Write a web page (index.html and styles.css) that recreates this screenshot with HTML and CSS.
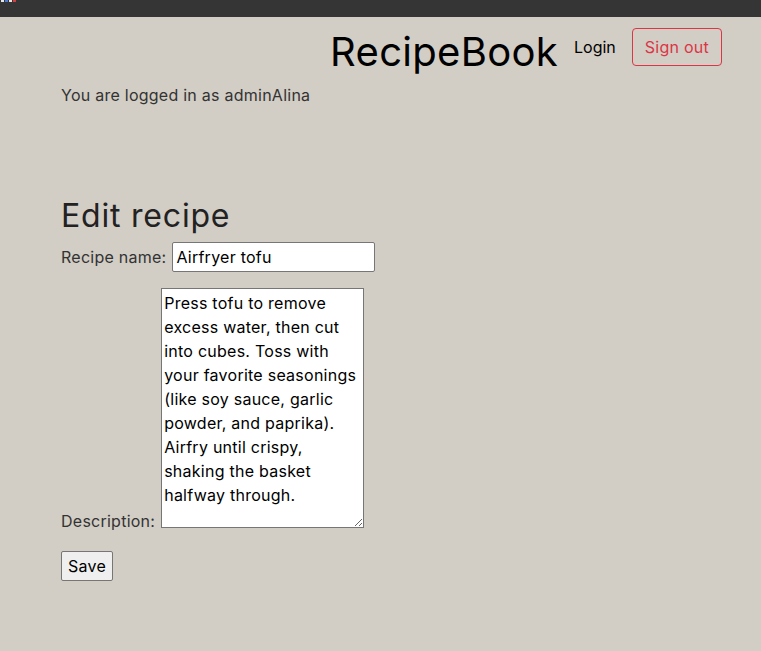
FILE: index.html
```html
<!DOCTYPE html>
<html>
<head>
<meta charset="utf-8">
<link rel="stylesheet" href="styles.css">
</head>
<body>
<div class="topbar"><span class="marks"><i class="m1"></i><i class="m2"></i><i class="m3"></i><i class="m4"></i></span></div>
<header class="header">
  <h1 class="brand">RecipeBook</h1>
  <a class="login">Login</a>
  <button class="signout">Sign out</button>
</header>
<main class="main">
  <p class="status">You are logged in as adminAlina</p>
  <h2 class="title">Edit recipe</h2>
  <form class="form">
    <div class="row">
      <label class="label">Recipe name:</label>
      <input class="input" type="text" value="Airfryer tofu">
    </div>
    <div class="row row-desc">
      <label class="label label-desc">Description:</label>
      <textarea class="textarea">Press tofu to remove excess water, then cut into cubes. Toss with your favorite seasonings (like soy sauce, garlic powder, and paprika). Airfry until crispy, shaking the basket halfway through.</textarea>
    </div>
    <button type="button" class="save">Save</button>
  </form>
</main>
</body>
</html>
```
FILE: styles.css
```css
* { box-sizing: border-box; }
html, body { margin: 0; padding: 0; }
body {
  background: #d2cdc5;
  font-family: "Inter", "Open Sans", sans-serif;
  font-size: 16px;
  line-height: 1.5;
  letter-spacing: 0.25px;
  color: #333;
  height: 651px;
  overflow: hidden;
}
.topbar {
  height: 17px;
  background: #353535;
}
.marks { display: flex; height: 2px; padding-left: 1px; }
.marks i { display: block; width: 3px; height: 2px; margin-right: 1px; }
.m1 { background: #e8e8e8; }
.m2 { background: #4a7bd0; }
.m3 { background: #e8e8e8; }
.m4 { background: #d04040; }
.header {
  display: flex;
  justify-content: flex-end;
  align-items: flex-start;
  padding: 11px 39px 0 0;
  height: 66px;
}
.brand {
  margin: 0 16px 0 0;
  font-size: 40px;
  font-weight: 400;
  letter-spacing: 0.3px;
  color: #000;
  line-height: 48px;
}
.login {
  color: #000;
  margin: 7px 16px 0 0;
  font-size: 16px;
  letter-spacing: 0;
}
.signout {
  font-family: inherit;
  font-size: 16px;
  letter-spacing: 0.25px;
  color: #dc3545;
  background: transparent;
  border: 1px solid #dc3545;
  border-radius: 4px;
  padding: 6px 12px;
  height: 38px;
  line-height: 1.5;
}
.main { padding-left: 61px; }
.status { margin: 0; }
.title {
  font-size: 32px;
  font-weight: 400;
  letter-spacing: 0.8px;
  margin: 90px 0 7px;
  color: #222;
  line-height: 1.2;
}
.row { display: flex; align-items: center; gap: 6px; }
.row-desc { align-items: flex-end; margin-top: 16px; }
.label { color: #333; }
.label-desc { margin-bottom: -5px; }
.input {
  width: 203px;
  height: 30px;
  font-family: inherit;
  font-size: 16px;
  letter-spacing: 0.25px;
  color: #000;
  border: 1px solid #767676;
  border-radius: 2px;
  padding: 1px 3px;
  background: #fff;
}
.textarea {
  width: 203px;
  height: 240px;
  font-family: inherit;
  font-size: 16px;
  letter-spacing: 0.25px;
  line-height: 24px;
  color: #000;
  border: 1px solid #767676;
  padding: 2px 2px;
  background: #fff;
  resize: both;
  display: block;
}
.save {
  margin-top: 23px;
  font-family: inherit;
  font-size: 16px;
  letter-spacing: 0.25px;
  color: #000;
  background: #efefef;
  border: 1px solid #767676;
  border-radius: 2px;
  height: 30px;
  padding: 0 6px;
}
```
